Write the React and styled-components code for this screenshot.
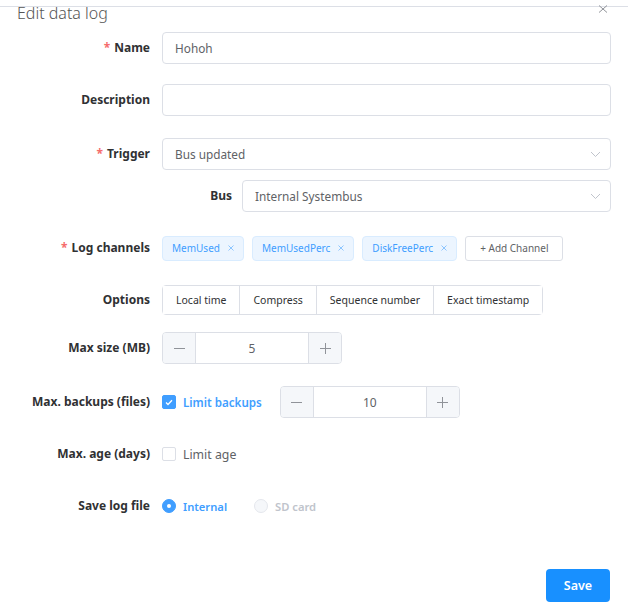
import React from 'react';
import styled, { createGlobalStyle } from 'styled-components';

const GlobalStyle = createGlobalStyle`
  html, body {
    margin: 0;
    padding: 0;
    background: #fff;
  }
  body {
    font-family: "Noto Sans", "Liberation Sans", sans-serif;
    color: #303133;
  }
`;

const Dialog = styled.div`
  width: 628px;
  height: 614px;
  box-sizing: border-box;
  border-top: 1px solid #dcdfe6;
  margin-top: 6px;
  position: relative;
  display: flex;
  flex-direction: column;
`;

const Title = styled.div`
  padding-left: 17px;
  margin-top: -2px;
  font-size: 16px;
  line-height: 16px;
  font-weight: 300;
  color: #555;
`;

const CloseButton = styled.button`
  position: absolute;
  top: -2px;
  right: 20px;
  width: 10px;
  height: 10px;
  padding: 0;
  border: none;
  background: none;
  display: flex;
`;

const Form = styled.div`
  display: flex;
  flex-direction: column;
  padding-top: 11px;
`;

const Row = styled.div`
  display: flex;
  align-items: center;
  min-height: 32px;
  margin-bottom: ${(p) => p.$gap ?? 20}px;
  padding-right: 17px;
`;

const Label = styled.label`
  width: ${(p) => p.$width || 162}px;
  flex-shrink: 0;
  box-sizing: border-box;
  padding-right: ${(p) => p.$pad ?? 12}px;
  text-align: right;
  font-size: 12px;
  font-weight: 700;
  color: #303133;
  line-height: 32px;
  white-space: nowrap;
`;

const Required = styled.span`
  color: #f56c6c;
  margin-right: 4px;
`;

const Field = styled.div`
  flex: 1;
  display: flex;
  align-items: center;
  margin-left: ${(p) => p.$indent || 0}px;
`;

const TextBox = styled.div`
  flex: 1;
  height: 32px;
  box-sizing: border-box;
  border: 1px solid #dcdfe6;
  border-radius: 4px;
  padding: 0 36px 0 12px;
  display: flex;
  align-items: center;
  font-size: 11.8px;
  color: #606266;
  position: relative;
`;

const Arrow = styled.svg`
  position: absolute;
  right: 9px;
  top: 12px;
`;

const TagList = styled.div`
  display: flex;
  align-items: center;
  gap: 8px;
`;

const Tag = styled.span`
  height: 25px;
  box-sizing: border-box;
  padding: 0 9px;
  background: #ecf5ff;
  border: 1px solid #d9ecff;
  border-radius: 4px;
  color: #409eff;
  font-size: 10px;
  display: inline-flex;
  align-items: center;
  gap: 8px;
`;

const GhostButton = styled.button`
  height: 25px;
  padding: 0 14px;
  background: #fff;
  border: 1px solid #dcdfe6;
  border-radius: 3px;
  font-family: inherit;
  font-size: 10px;
  color: #606266;
`;

const Segmented = styled.div`
  display: flex;
  border: 1px solid #dcdfe6;
  border-radius: 4px;
  height: 30px;
  box-sizing: border-box;
`;

const Segment = styled.button`
  height: 100%;
  padding: 0 13px;
  border: none;
  border-left: ${(p) => (p.$first ? 'none' : '1px solid #dcdfe6')};
  background: #fff;
  font-family: inherit;
  font-size: 10.5px;
  color: #303133;
`;

const NumberInput = styled.div`
  width: 180px;
  height: 32px;
  box-sizing: border-box;
  border: 1px solid #dcdfe6;
  border-radius: 4px;
  display: flex;
  overflow: hidden;
  margin-left: ${(p) => p.$offset || 0}px;
`;

const Step = styled.span`
  width: 32px;
  flex-shrink: 0;
  background: #f5f7fa;
  display: flex;
  align-items: center;
  justify-content: center;
  border-${(p) => p.$side}: 1px solid #dcdfe6;
`;

const NumberValue = styled.span`
  flex: 1;
  display: flex;
  align-items: center;
  justify-content: center;
  font-size: 12px;
  color: #606266;
`;

const Check = styled.span`
  width: 14px;
  height: 14px;
  box-sizing: border-box;
  border-radius: 2px;
  border: 1px solid ${(p) => (p.$on ? '#409eff' : '#dcdfe6')};
  background: ${(p) => (p.$on ? '#409eff' : '#fff')};
  display: inline-flex;
  align-items: center;
  justify-content: center;
`;

const Radio = styled.span`
  width: 14px;
  height: 14px;
  box-sizing: border-box;
  border-radius: 50%;
  border: 1px solid ${(p) => (p.$on ? '#409eff' : '#e4e7ed')};
  background: ${(p) => (p.$on ? '#409eff' : '#f5f7fa')};
  display: inline-flex;
  align-items: center;
  justify-content: center;

  &::after {
    content: '';
    width: 4px;
    height: 4px;
    border-radius: 50%;
    background: ${(p) => (p.$on ? '#fff' : 'transparent')};
  }
`;

const Choice = styled.span`
  display: inline-flex;
  align-items: center;
  gap: 7px;
  margin-right: ${(p) => p.$mr || 0}px;
  font-size: ${(p) => p.$size || 11.6}px;
  font-weight: ${(p) => (p.$active ? 600 : 400)};
  color: ${(p) => (p.$disabled ? '#c0c4cc' : p.$active ? '#409eff' : '#606266')};
`;

const Footer = styled.div`
  display: flex;
  justify-content: flex-end;
  padding: 27px 18px 0 0;
`;

const PrimaryButton = styled.button`
  width: 64px;
  height: 33px;
  border: none;
  border-radius: 4px;
  background: #1890ff;
  color: #fff;
  font-family: inherit;
  font-size: 12.5px;
  font-weight: 600;
`;

const Chevron = () => (
  <Arrow width="11" height="7" viewBox="0 0 11 7">
    <path d="M1 1l4.5 4.5L10 1" fill="none" stroke="#c0c4cc" strokeWidth="1" />
  </Arrow>
);

const Minus = () => (
  <svg width="11" height="11" viewBox="0 0 11 11">
    <path d="M0 5.5h11" stroke="#909399" strokeWidth="1" />
  </svg>
);

const Plus = () => (
  <svg width="11" height="11" viewBox="0 0 11 11">
    <path d="M0 5.5h11M5.5 0v11" stroke="#909399" strokeWidth="1" />
  </svg>
);

const TagClose = () => (
  <svg width="6" height="6" viewBox="0 0 6 6">
    <path d="M0.5 0.5l5 5M5.5 0.5l-5 5" stroke="#8cc5ff" strokeWidth="1" />
  </svg>
);

const channels = ['MemUsed', 'MemUsedPerc', 'DiskFreePerc'];
const options = ['Local time', 'Compress', 'Sequence number', 'Exact timestamp'];

const NumberStepper = ({ value, offset }) => (
  <NumberInput $offset={offset}>
    <Step $side="right"><Minus /></Step>
    <NumberValue>{value}</NumberValue>
    <Step $side="left"><Plus /></Step>
  </NumberInput>
);

export default function App() {
  return (
    <>
      <GlobalStyle />
      <Dialog>
        <Title>Edit data log</Title>
        <CloseButton aria-label="Close">
          <svg width="10" height="8" viewBox="0 0 10 8">
            <path d="M1 0.5l8 7M9 0.5l-8 7" stroke="#909399" strokeWidth="1" />
          </svg>
        </CloseButton>

        <Form>
          <Row>
            <Label><Required>*</Required>Name</Label>
            <TextBox>Hohoh</TextBox>
          </Row>

          <Row $gap={22}>
            <Label>Description</Label>
            <TextBox />
          </Row>

          <Row $gap={10}>
            <Label><Required>*</Required>Trigger</Label>
            <TextBox>Bus updated<Chevron /></TextBox>
          </Row>

          <Row>
            <Field $indent={162}>
              <Label $width={80} $pad={10}>Bus</Label>
              <TextBox>Internal Systembus<Chevron /></TextBox>
            </Field>
          </Row>

          <Row>
            <Label><Required>*</Required>Log channels</Label>
            <TagList>
              {channels.map((c) => (
                <Tag key={c}>{c}<TagClose /></Tag>
              ))}
              <GhostButton>+ Add Channel</GhostButton>
            </TagList>
          </Row>

          <Row $gap={16}>
            <Label>Options</Label>
            <Segmented>
              {options.map((o, i) => (
                <Segment key={o} $first={i === 0}>{o}</Segment>
              ))}
            </Segmented>
          </Row>

          <Row $gap={22}>
            <Label>Max size (MB)</Label>
            <NumberStepper value={5} />
          </Row>

          <Row>
            <Label>Max. backups (files)</Label>
            <Choice $active>
              <Check $on>
                <svg width="8" height="7" viewBox="0 0 8 7">
                  <path d="M1 3.5l2 2L7 1.2" fill="none" stroke="#fff" strokeWidth="1.3" />
                </svg>
              </Check>
              Limit backups
            </Choice>
            <NumberStepper value={10} offset={18} />
          </Row>

          <Row>
            <Label>Max. age (days)</Label>
            <Choice $size={12.3}>
              <Check />
              Limit age
            </Choice>
          </Row>

          <Row>
            <Label>Save log file</Label>
            <Choice $active $mr={27} $size={11.2}>
              <Radio $on />
              Internal
            </Choice>
            <Choice $disabled $active $size={11.2}>
              <Radio />
              SD card
            </Choice>
          </Row>
        </Form>

        <Footer>
          <PrimaryButton>Save</PrimaryButton>
        </Footer>
      </Dialog>
    </>
  );
}
